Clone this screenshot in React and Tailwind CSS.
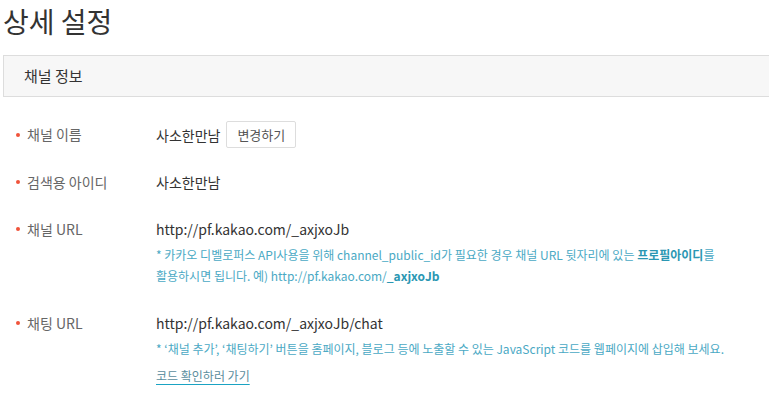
import React from 'react';

const FONT = { fontFamily: '"Noto Sans CJK KR", "Noto Sans", sans-serif' };

function Row({ label, children, className = '' }) {
  return (
    <div className={`flex ${className}`}>
      <div className="w-[156px] shrink-0 flex items-start">
        <div className="h-[20px] flex items-center pl-[16px]">
          <span className="w-[4px] h-[4px] rounded-full bg-[#f0533a] mr-[7px]" />
          <span className="text-[14px] text-[#666]">{label}</span>
        </div>
      </div>
      <div className="flex-1">{children}</div>
    </div>
  );
}

export default function App() {
  return (
    <div className="w-[769px] h-[412px] bg-white overflow-hidden text-[#333]" style={FONT}>
      <h1 className="text-[28px] leading-[34px] pt-[4px] pl-[3px] text-[#333]">상세 설정</h1>

      <div className="mt-[17px] ml-[3px] h-[42px] border border-r-0 border-[#ddd] bg-[#f7f7f7] flex items-center pl-[20px]">
        <span className="text-[15px] text-[#333]">채널 정보</span>
      </div>

      <div className="mt-[24px]">
        <Row label="채널 이름" className="items-center">
          <div className="flex items-center">
            <span className="text-[14px] leading-[20px]">사소한만남</span>
            <button className="ml-[6px] h-[27px] px-[10px] border border-[#ddd] bg-white text-[13px] text-[#555] rounded-[2px]">
              변경하기
            </button>
          </div>
        </Row>

        <Row label="검색용 아이디" className="mt-[24px]">
          <div className="text-[14px] leading-[20px]">사소한만남</div>
        </Row>

        <Row label="채널 URL" className="mt-[27px]">
          <div className="text-[14px] leading-[20px]">http://pf.kakao.com/_axjxoJb</div>
          <p className="mt-[5px] text-[12px] leading-[21px] text-[#4aa9c4]">
            * 카카오 디벨로퍼스 API사용을 위해 channel_public_id가 필요한 경우 채널 URL 뒷자리에 있는{' '}
            <b className="text-[#2b97b3]">프로필아이디</b>를
            <br />
            활용하시면 됩니다. 예) http://pf.kakao.com/<b className="text-[#2b97b3]">_axjxoJb</b>
          </p>
        </Row>

        <Row label="채팅 URL" className="mt-[27px]">
          <div className="text-[14px] leading-[20px]">http://pf.kakao.com/_axjxoJb/chat</div>
          <p className="mt-[5px] text-[12px] leading-[21px] text-[#4aa9c4]">
            * ‘채널 추가’, ‘채팅하기’ 버튼을 홈페이지, 블로그 등에 노출할 수 있는 JavaScript 코드를 웹페이지에 삽입해 보세요.
          </p>
          <a href="#" className="inline-block mt-[7px] text-[12px] leading-[20px] text-[#5b8d9d] underline decoration-[#1aa3c3] underline-offset-[3px]">
            코드 확인하러 가기
          </a>
        </Row>
      </div>
    </div>
  );
}
